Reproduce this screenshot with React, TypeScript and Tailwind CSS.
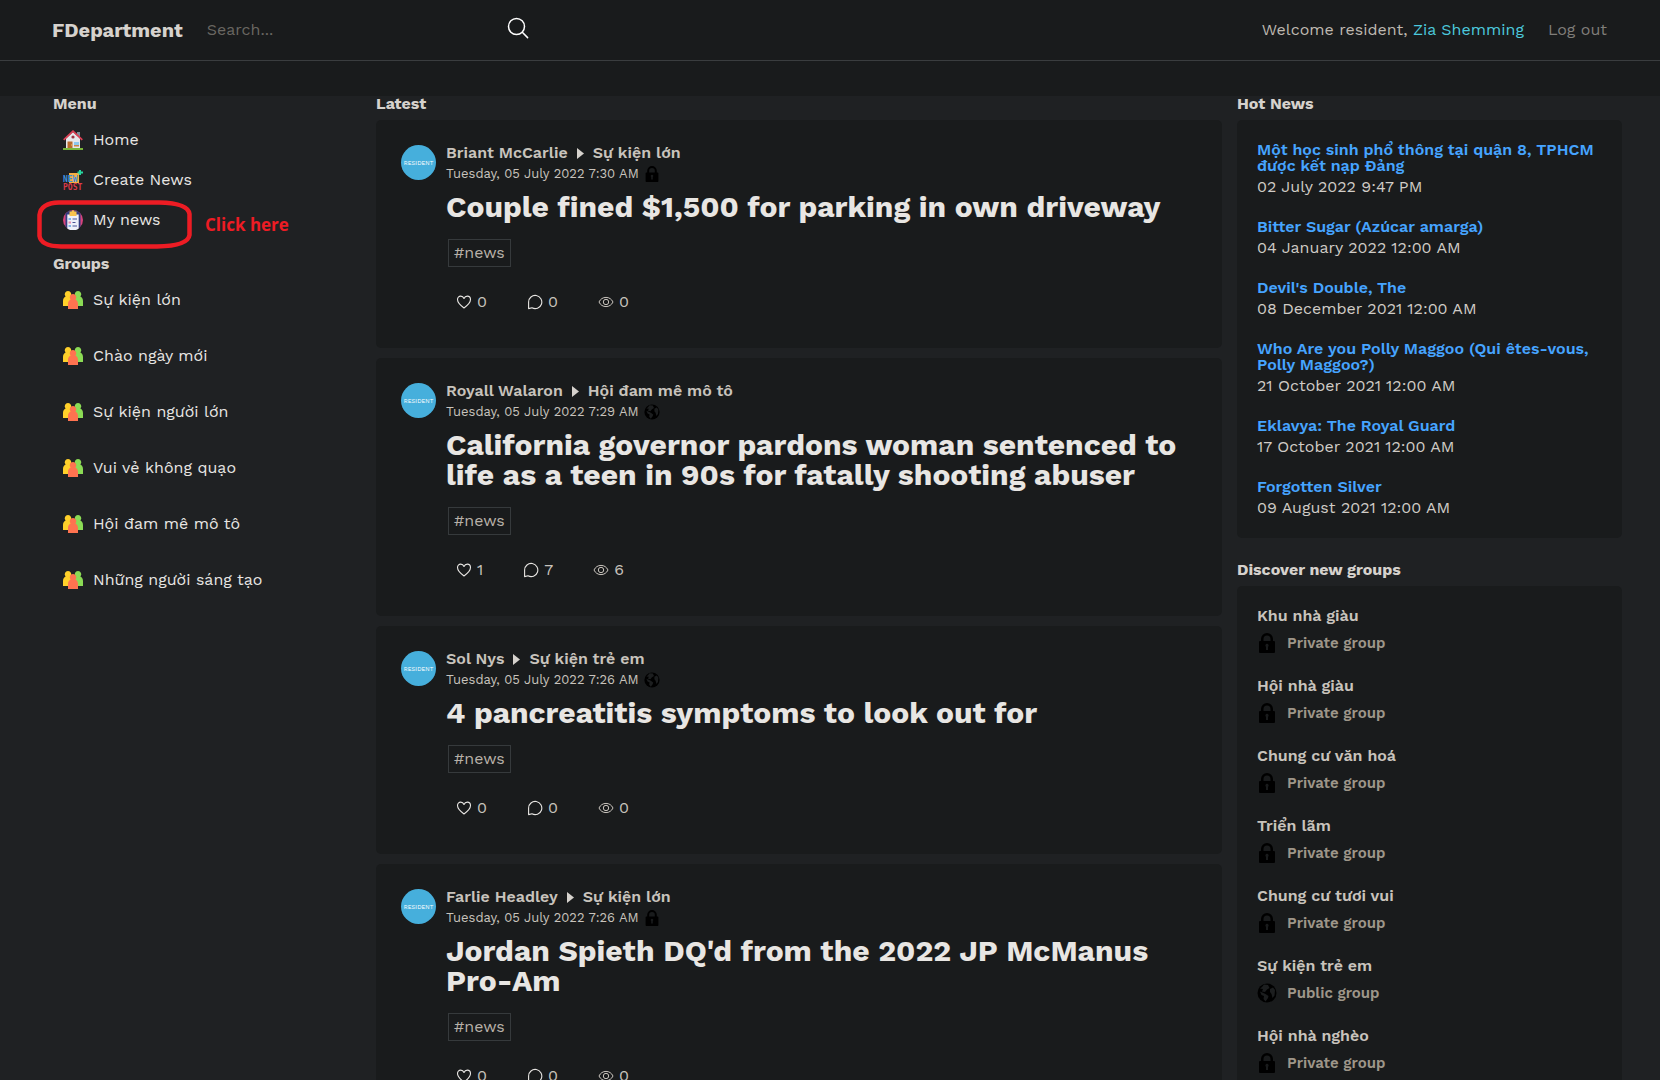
import type { ReactNode } from 'react';

type Privacy = 'private' | 'public';

const groups = [
  'Sự kiện lớn',
  'Chào ngày mới',
  'Sự kiện người lớn',
  'Vui vẻ không quạo',
  'Hội đam mê mô tô',
  'Những người sáng tạo',
];

const posts: {
  author: string;
  group: string;
  time: string;
  privacy: Privacy;
  title: string;
  likes: number;
  comments: number;
  views: number;
}[] = [
  { author: 'Briant McCarlie', group: 'Sự kiện lớn', time: 'Tuesday, 05 July 2022 7:30 AM', privacy: 'private', title: 'Couple fined $1,500 for parking in own driveway', likes: 0, comments: 0, views: 0 },
  { author: 'Royall Walaron', group: 'Hội đam mê mô tô', time: 'Tuesday, 05 July 2022 7:29 AM', privacy: 'public', title: 'California governor pardons woman sentenced to life as a teen in 90s for fatally shooting abuser', likes: 1, comments: 7, views: 6 },
  { author: 'Sol Nys', group: 'Sự kiện trẻ em', time: 'Tuesday, 05 July 2022 7:26 AM', privacy: 'public', title: '4 pancreatitis symptoms to look out for', likes: 0, comments: 0, views: 0 },
  { author: 'Farlie Headley', group: 'Sự kiện lớn', time: 'Tuesday, 05 July 2022 7:26 AM', privacy: 'private', title: "Jordan Spieth DQ'd from the 2022 JP McManus Pro-Am", likes: 0, comments: 0, views: 0 },
];

const hotNews = [
  { title: 'Một học sinh phổ thông tại quận 8, TPHCM được kết nạp Đảng', time: '02 July 2022 9:47 PM' },
  { title: 'Bitter Sugar (Azúcar amarga)', time: '04 January 2022 12:00 AM' },
  { title: "Devil's Double, The", time: '08 December 2021 12:00 AM' },
  { title: 'Who Are you Polly Maggoo (Qui êtes-vous, Polly Maggoo?)', time: '21 October 2021 12:00 AM' },
  { title: 'Eklavya: The Royal Guard', time: '17 October 2021 12:00 AM' },
  { title: 'Forgotten Silver', time: '09 August 2021 12:00 AM' },
];

const discover: { name: string; privacy: Privacy }[] = [
  { name: 'Khu nhà giàu', privacy: 'private' },
  { name: 'Hội nhà giàu', privacy: 'private' },
  { name: 'Chung cư văn hoá', privacy: 'private' },
  { name: 'Triển lãm', privacy: 'private' },
  { name: 'Chung cư tươi vui', privacy: 'private' },
  { name: 'Sự kiện trẻ em', privacy: 'public' },
  { name: 'Hội nhà nghèo', privacy: 'private' },
];

function SearchIcon() {
  return (
    <svg viewBox="0 0 22 22" className="size-[22px]" fill="none" stroke="#fff" strokeWidth="1.5" strokeLinecap="round" aria-hidden="true">
      <circle cx="9.5" cy="9.5" r="8" />
      <path d="M15.3 15.3 20.6 20.6" />
    </svg>
  );
}

function HouseIcon() {
  return (
    <svg viewBox="0 0 20 20" className="size-5 shrink-0" aria-hidden="true">
      <path d="M14 2h3v6h-3z" fill="#7d8f9b" />
      <path d="M3 8.500 10 2l7 6.500V18.500H3z" fill="#e6e7ea" />
      <path d="M0.700 9.800 10 1.200l9.300 8.600" fill="none" stroke="#dc4055" strokeWidth="1.800" />
      <circle cx="10" cy="7" r="1.600" fill="#9c3342" />
      <path d="M4.500 11.500h5v7h-5z" fill="#b96a2c" />
      <path d="M8 14.500h1v1H8z" fill="#f5c35b" />
      <path d="M11 12h5v4h-5z" fill="#8cc7ee" />
      <path d="M11 15h5v1.500h-5z" fill="#c98545" />
      <path d="M0 18h20v2H0z" fill="#79b53a" />
    </svg>
  );
}

function NewPostIcon() {
  return (
    <svg viewBox="0 0 20 20" className="size-5 shrink-0 overflow-visible" aria-hidden="true">
      <path d="M6 3h10v10H6z" fill="#f6ae42" />
      <path d="M17 0v5M14.500 2.500H20" fill="none" stroke="#27d6a0" strokeWidth="2" />
      <text x="0" y="12" fill="#3f8fdc" className="font-['DejaVu_Sans_Mono',monospace] text-[8px] font-bold">NEW</text>
      <text x="0" y="20" fill="#d83a4a" className="font-['DejaVu_Sans_Mono',monospace] text-[8px] font-bold">POST</text>
    </svg>
  );
}

function ClipboardIcon() {
  return (
    <svg viewBox="0 0 20 20" className="size-5 shrink-0" aria-hidden="true">
      <circle cx="10" cy="10" r="10" fill="#d8447c" />
      <path d="M2.500 3.400 6 .8h8l3.500 2.600v13.200A10 10 0 0 1 10 20a10 10 0 0 1-7.500-3.400z" fill="#343c80" />
      <path d="M4.300 4.500h11.400v14a10 10 0 0 1-11.400 0z" fill="#eef0fa" />
      <path d="M6.500 1.500h7V6h-7z" fill="#f8c24e" />
      <circle cx="10" cy="1.500" r="1.300" fill="#f8c24e" />
      <path d="M5.500 8H8v2H5.500zM5.500 15H8v2H5.500z" fill="#7fb2e6" />
      <path d="M5.500 11.500H8v2H5.500z" fill="#e98ab0" />
      <path d="M9.500 9H14M9.500 12.500h3M9.500 16H14" stroke="#4a5396" strokeWidth="1" />
    </svg>
  );
}

function GroupIcon() {
  return (
    <svg viewBox="0 0 20 20" className="size-5 shrink-0" aria-hidden="true">
      <path d="M5 1a3.200 3.200 0 0 1 2.400 5.400C9 7.300 10 8.800 10 11v5H0v-5c0-2.200 1-3.700 2.600-4.600A3.200 3.200 0 0 1 5 1z" fill="#ffd02a" />
      <path d="M15 1a3.200 3.200 0 0 1 2.400 5.400C19 7.300 20 8.800 20 11v5H10v-5c0-2.200 1-3.700 2.600-4.600A3.200 3.200 0 0 1 15 1z" fill="#8bdb55" />
      <path d="M10 4a3.200 3.200 0 0 1 2.400 5.400C14 10.300 15 11.800 15 14v5H5v-5c0-2.200 1-3.700 2.600-4.600A3.200 3.200 0 0 1 10 4z" fill="#ff7350" />
    </svg>
  );
}

function PrivacyIcon({ privacy, className }: { privacy: Privacy; className: string }) {
  if (privacy === 'private') {
    return (
      <svg viewBox="0 0 20 20" className={className} role="img" aria-label="Private">
        <path fill="#000" fillRule="evenodd" d="M4 8V6a6 6 0 0 1 12 0v2h1a1 1 0 0 1 1 1v10a1 1 0 0 1-1 1H3a1 1 0 0 1-1-1V9a1 1 0 0 1 1-1zM6.500 8h7V6a3.500 3.500 0 0 0-7 0zM10 10.800a1.700 1.700 0 0 0-1 3V17h2v-3.200a1.700 1.700 0 0 0-1-3z" />
      </svg>
    );
  }
  return (
    <svg viewBox="0 0 20 20" className={className} role="img" aria-label="Public">
      <circle cx="10" cy="10" r="9.500" fill="#000" />
      <path d="M7 1.500 5 4 3 5.500l3 .5-1 2.500 3 .5 2-2.500L12.500 5 11 2zM3 8.500 4.500 12 7 13l-.5 3 2 2.500L11 15l.5-2-3-2zM13 6l3-1.500 2 2.500-.5 5.500-2 2.500-1-4L13 9z" fill="#1c1e1f" />
    </svg>
  );
}

function HeartIcon() {
  return (
    <svg viewBox="0 0 16 16" className="size-4 shrink-0" fill="none" stroke="#e8e6e3" strokeWidth="1.100" strokeLinejoin="round" aria-hidden="true">
      <path d="M8 14C4.500 11.500 1.500 8.800 1.500 5.600c0-2 1.400-3.500 3.200-3.500C6.200 2.100 7.400 3 8 4.500c.6-1.500 1.800-2.400 3.300-2.400 1.800 0 3.200 1.500 3.200 3.500C14.500 8.800 11.500 11.500 8 14z" />
    </svg>
  );
}

function CommentIcon() {
  return (
    <svg viewBox="0 0 16 16" className="size-4 shrink-0" fill="none" stroke="#e8e6e3" strokeWidth="1.100" strokeLinejoin="round" aria-hidden="true">
      <path d="M1.600 14.600V8A6.600 6.600 0 1 1 5 13.800z" />
    </svg>
  );
}

function EyeIcon() {
  return (
    <svg viewBox="0 0 16 16" className="size-4 shrink-0" fill="none" stroke="#c8c3bc" strokeWidth="1" aria-hidden="true">
      <path d="M1 8c1.400-3 4-4.600 7-4.600S13.600 5 15 8c-1.400 3-4 4.600-7 4.600S2.400 11 1 8z" />
      <circle cx="8" cy="8" r="2.700" />
    </svg>
  );
}

function SectionTitle({ children }: { children: ReactNode }) {
  return <h2 className="text-[16px] leading-4 font-bold text-[#d6d2cd]">{children}</h2>;
}

function Stat({ icon, value, label }: { icon: ReactNode; value: number; label: string }) {
  return (
    <button type="button" aria-label={label} className="flex items-center gap-[5px] text-[16px] leading-4 text-[#c8c3bc]">
      {icon}
      <span>{value}</span>
    </button>
  );
}

function Post({ post }: { post: (typeof posts)[number] }) {
  return (
    <article className="flex gap-2.5 rounded-[5px] bg-[#191b1c] px-[25px] pt-[25px] pb-[38px]">
      <div className="flex size-[35px] shrink-0 items-center justify-center rounded-full bg-[#46afdc] text-[6px] text-white">
        RESIDENT
      </div>
      <div className="min-w-0 flex-1">
        <div className="flex items-center gap-[9px] text-[16px] leading-4 font-semibold text-[#c8c3bc]">
          <a href="#author">{post.author}</a>
          <svg viewBox="0 0 7 11" className="h-[11px] w-[7px]" aria-hidden="true">
            <path d="M0 0 7 5.500 0 11z" fill="#d6d2cd" />
          </svg>
          <a href="#group">{post.group}</a>
        </div>
        <div className="mt-[5px] flex h-4 items-center gap-[5px] text-[13px] leading-4 text-[#c8c3bc]">
          <time>{post.time}</time>
          <PrivacyIcon privacy={post.privacy} className="size-4" />
        </div>
        <h3 className="mt-2.5 text-[30px] leading-[30px] font-bold text-[#e8e6e3]">
          <a href="#post">{post.title}</a>
        </h3>
        <a href="#news" className="mt-[17px] ml-0.5 flex h-7 w-fit items-center border border-[#363a3c] px-[5px] text-[16px] leading-4 text-[#b8b1a8]">
          #news
        </a>
        <div className="mt-[27px] ml-2.5 flex gap-10">
          <Stat icon={<HeartIcon />} value={post.likes} label="Likes" />
          <Stat icon={<CommentIcon />} value={post.comments} label="Comments" />
          <Stat icon={<EyeIcon />} value={post.views} label="Views" />
        </div>
      </div>
    </article>
  );
}

function MenuLink({ icon, children }: { icon: ReactNode; children: ReactNode }) {
  return (
    <a href="#menu" className="flex items-center gap-2.5 text-[16px] leading-5 text-[#e8e6e3]">
      {icon}
      {children}
    </a>
  );
}

export default function App() {
  return (
    <div className="h-screen overflow-hidden bg-[#1f2123] font-['Work_Sans',Inter,sans-serif]">
      <header className="bg-[#191b1c] pb-[35px]">
        <div className="flex h-[61px] items-center border-b border-[#3a3d3f] pr-[53px] pl-[52px]">
          <a href="#home" className="text-[20px] font-bold text-[#d6d2cd]">FDepartment</a>
          <form className="ml-6 flex w-[322px] items-center justify-between">
            <input type="text" aria-label="Search" placeholder="Search..." className="w-60 bg-transparent text-[16px] text-[#e8e6e3] outline-none placeholder:text-[#6a6762]" />
            <button type="button" aria-label="Search" className="-mt-1"><SearchIcon /></button>
          </form>
          <div className="ml-auto flex gap-6 text-[16px] text-[#beb8b0]">
            <p>Welcome resident, <a href="#profile" className="text-[#4cc9dc]">Zia Shemming</a></p>
            <a href="#logout" className="text-[#807e7a]">Log out</a>
          </div>
        </div>
      </header>

      <main className="flex items-start pr-[38px] pl-[53px]">
        <nav className="relative w-[323px] shrink-0">
          <SectionTitle>Menu</SectionTitle>
          <div className="mt-[18px] ml-2.5 flex flex-col gap-5">
            <MenuLink icon={<HouseIcon />}>Home</MenuLink>
            <MenuLink icon={<NewPostIcon />}>Create News</MenuLink>
            <MenuLink icon={<ClipboardIcon />}>My news</MenuLink>
          </div>
          <div className="mt-[26px] mb-[18px]"><SectionTitle>Groups</SectionTitle></div>
          <div className="ml-2.5 flex flex-col gap-9">
            {groups.map((name) => (
              <MenuLink key={name} icon={<GroupIcon />}>{name}</MenuLink>
            ))}
          </div>
          <svg viewBox="0 0 156 50" className="absolute top-[104px] -left-4 h-[50px] w-[156px]" fill="none" stroke="#ed1c24" strokeWidth="4.500" aria-hidden="true">
            <path d="M22 2.500H122Q151 3 152.500 14V35Q151 46 120 46.500H24Q4 46 2.500 36V15Q4 3 22 2.500z" />
          </svg>
          <p className="absolute top-[117px] left-[152px] font-['Open_Sans',sans-serif] text-[17px] leading-6 font-bold text-[#ed1c24]">Click here</p>
        </nav>

        <section className="min-w-0 flex-1">
          <SectionTitle>Latest</SectionTitle>
          <div className="mt-2 flex flex-col gap-2.5">
            {posts.map((post) => (
              <Post key={post.title} post={post} />
            ))}
          </div>
        </section>

        <aside className="ml-[15px] w-[385px] shrink-0">
          <SectionTitle>Hot News</SectionTitle>
          <div className="mt-2 flex flex-col gap-6 rounded-[5px] bg-[#191b1c] px-5 pt-[22px] pb-[22px]">
            {hotNews.map((item) => (
              <div key={item.title}>
                <a href="#hot" className="block text-[16px] leading-4 font-semibold text-[#46a4ff]">{item.title}</a>
                <time className="mt-[5px] block text-[16px] leading-4 text-[#d0ccc6]">{item.time}</time>
              </div>
            ))}
          </div>
          <div className="mt-6"><SectionTitle>Discover new groups</SectionTitle></div>
          <div className="mt-2 flex flex-col gap-[25px] rounded-[5px] bg-[#191b1c] px-5 pt-[22px] pb-6">
            {discover.map((group) => (
              <a key={group.name} href="#discover" className="block text-[16px] font-semibold">
                <span className="block leading-4 text-[#c8c3bc]">{group.name}</span>
                <span className="mt-[9px] flex h-5 items-center gap-2.5 text-[15px] text-[#9e9689]">
                  <PrivacyIcon privacy={group.privacy} className="size-5" />
                  {group.privacy === 'private' ? 'Private group' : 'Public group'}
                </span>
              </a>
            ))}
          </div>
        </aside>
      </main>
    </div>
  );
}
